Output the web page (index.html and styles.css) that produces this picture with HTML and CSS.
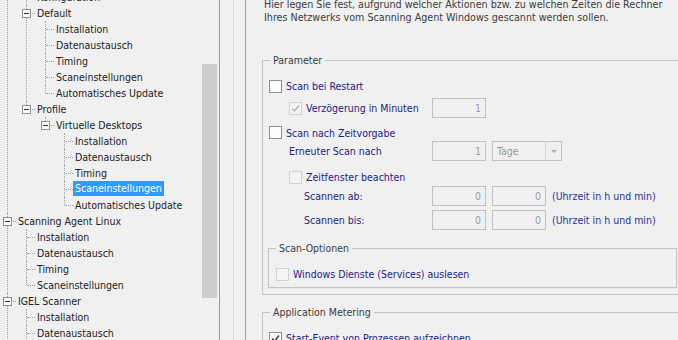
FILE: index.html
```html
<!DOCTYPE html>
<html>
<head>
  <title>Scanning Agent Windows - Scaneinstellungen</title>
  <link rel="stylesheet" href="styles.css">
</head>
<body>
  <div class="window">

    <!-- TREE -->
    <div class="tree-panel">
      <div class="tree-wrap">
        <ul class="tree">
          <li>
            <div class="node"><i class="exp"></i><span>Scanning Agent Windows</span></div>
            <ul>
              <li><div class="node"><span>Konfiguration</span></div></li>
              <li>
                <div class="node"><i class="exp"></i><span>Default</span></div>
                <ul>
                  <li><div class="node"><span>Installation</span></div></li>
                  <li><div class="node"><span>Datenaustausch</span></div></li>
                  <li><div class="node"><span>Timing</span></div></li>
                  <li><div class="node"><span>Scaneinstellungen</span></div></li>
                  <li><div class="node"><span>Automatisches Update</span></div></li>
                </ul>
              </li>
              <li>
                <div class="node"><i class="exp"></i><span>Profile</span></div>
                <ul>
                  <li>
                    <div class="node"><i class="exp"></i><span>Virtuelle Desktops</span></div>
                    <ul>
                      <li><div class="node"><span>Installation</span></div></li>
                      <li><div class="node"><span>Datenaustausch</span></div></li>
                      <li><div class="node"><span>Timing</span></div></li>
                      <li><div class="node sel"><span>Scaneinstellungen</span></div></li>
                      <li><div class="node"><span>Automatisches Update</span></div></li>
                    </ul>
                  </li>
                </ul>
              </li>
            </ul>
          </li>
          <li>
            <div class="node"><i class="exp"></i><span>Scanning Agent Linux</span></div>
            <ul>
              <li><div class="node"><span>Installation</span></div></li>
              <li><div class="node"><span>Datenaustausch</span></div></li>
              <li><div class="node"><span>Timing</span></div></li>
              <li><div class="node"><span>Scaneinstellungen</span></div></li>
            </ul>
          </li>
          <li>
            <div class="node"><i class="exp"></i><span>IGEL Scanner</span></div>
            <ul>
              <li><div class="node"><span>Installation</span></div></li>
              <li><div class="node"><span>Datenaustausch</span></div></li>
              <li><div class="node"><span>Timing</span></div></li>
              <li><div class="node"><span>Scaneinstellungen</span></div></li>
            </ul>
          </li>
          <li><div class="node"><span>Einstellungen</span></div></li>
        </ul>
      </div>
      <div class="vscroll"><div class="thumb"></div></div>
    </div>

    <div class="splitter"><div class="splitter-line"></div></div>

    <!-- SETTINGS -->
    <div class="content">
      <p class="intro">Hier legen Sie fest, aufgrund welcher Aktionen bzw. zu welchen Zeiten die Rechner<br>Ihres Netzwerks vom Scanning Agent Windows gescannt werden sollen.</p>

      <fieldset class="group group-main">
        <legend>Parameter</legend>

        <div class="row mt10">
          <div class="lbl in1"><span class="cb"></span>Scan bei Restart</div>
        </div>
        <div class="row tall mt3">
          <div class="lbl in2">
            <span class="cb off"><svg width="11" height="11" viewBox="0 0 11 11"><path d="M2 5.5 L4.5 8 L9 2.5" fill="none" stroke="#b4b4b4" stroke-width="1.4"/></svg></span>Verzögerung in Minuten
          </div>
          <input class="tb" value="1" disabled>
        </div>
        <div class="row short mt6">
          <div class="lbl in1"><span class="cb"></span>Scan nach Zeitvorgabe</div>
        </div>
        <div class="row tall">
          <div class="lbl in2">Erneuter Scan nach</div>
          <input class="tb" value="1" disabled>
          <div class="dd"><span class="dd-text">Tage</span><span class="dd-btn"><i class="arrow"></i></span></div>
        </div>
        <div class="row mt7">
          <div class="lbl in2"><span class="cb off"></span>Zeitfenster beachten</div>
        </div>
        <div class="row tall">
          <div class="lbl in3">Scannen ab:</div>
          <input class="tb" value="0" disabled>
          <input class="tb" value="0" disabled>
          <span class="hint">(Uhrzeit in h und min)</span>
        </div>
        <div class="row tall mt4">
          <div class="lbl in3">Scannen bis:</div>
          <input class="tb" value="0" disabled>
          <input class="tb" value="0" disabled>
          <span class="hint">(Uhrzeit in h und min)</span>
        </div>

        <fieldset class="group group-sub">
          <legend>Scan-Optionen</legend>
          <div class="row mt10">
            <div class="lbl in-sub"><span class="cb off"></span>Windows Dienste (Services) auslesen</div>
          </div>
        </fieldset>
      </fieldset>

      <fieldset class="group group-main group-next">
        <legend>Application Metering</legend>
        <div class="row mt10">
          <div class="lbl in1">
            <span class="cb"><svg width="11" height="11" viewBox="0 0 11 11"><path d="M2 5.5 L4.5 8 L9 2.5" fill="none" stroke="#333" stroke-width="1.4"/></svg></span>Start-Event von Prozessen aufzeichnen
          </div>
        </div>
      </fieldset>
    </div>
  </div>
</body>
</html>
```

FILE: styles.css
```css
body {
  margin: 0;
  background: #f0f0f0;
  font-family: "DejaVu Sans Condensed", "Liberation Sans", sans-serif;
  font-size: 10.5px;
  color: #222;
}
.window { display: flex; height: 340px; overflow: hidden; }

/* tree view on the left */
.tree-panel {
  width: 220px;
  flex: none;
  box-sizing: border-box;
  display: flex;
  padding-right: 2px;
  border-right: 1px solid #9d9d9d;
}
.tree-wrap { flex: 1; overflow: hidden; }
.tree { margin: -27px 0 0; padding: 0; list-style: none; }
.tree ul { margin: 0; padding: 0 0 0 19px; list-style: none; }
.tree li { position: relative; }
.tree li::before {
  content: "";
  position: absolute;
  left: 7px;
  top: 0;
  bottom: 0;
  border-left: 1px dotted #a3a3a3;
}
.tree li:last-child::before { bottom: auto; height: 8px; }
.node {
  position: relative;
  height: 16px;
  line-height: 16px;
  padding-left: 16px;
  white-space: nowrap;
}
.node::before {
  content: "";
  position: absolute;
  left: 8px;
  top: 8px;
  width: 8px;
  border-top: 1px dotted #a3a3a3;
}
.node span { padding: 0 2px; }
.node.sel span {
  display: inline-block;
  vertical-align: top;
  line-height: 15px;
  background: #3399ff;
  color: #fff;
}
.exp {
  position: absolute;
  left: 3px;
  top: 4px;
  width: 9px;
  height: 9px;
  box-sizing: border-box;
  border: 1px solid #929292;
  background: #fcfcfc;
}
.exp::after {
  content: "";
  position: absolute;
  left: 1px;
  top: 3px;
  width: 5px;
  height: 1px;
  background: #333;
}

.vscroll { width: 15px; flex: none; background: #f0f0f0; }
.thumb { margin-top: 64px; height: 234px; background: #cdcdcd; }

.splitter { width: 25px; flex: none; border-right: 1px solid #a5a5a5; }
.splitter-line { margin-left: 13px; height: 100%; border-left: 1px solid #dadada; }

/* settings on the right */
.content { flex: 1; min-width: 0; padding-left: 16px; overflow: hidden; }
.intro {
  margin: -2px 0 0;
  padding-left: 2px;
  font-size: 10.65px;
  line-height: 13px;
  color: #3c3c3c;
  white-space: nowrap;
}

.group {
  margin: 0;
  padding: 0;
  min-width: 0;
  box-sizing: border-box;
  border: 1px solid #c4c4c4;
}
.group legend {
  margin-left: 7px;
  padding: 0 3px;
  line-height: 14px;
  color: #3c3c3c;
}
.group-main { width: 440px; margin-top: 29px; }
.group-next { margin-top: 10px; }
.group-sub { width: 409px; margin: 11px 0 6px 5px; padding-bottom: 4px; }

.row { display: flex; align-items: center; height: 18px; white-space: nowrap; }
.row.tall { height: 20px; }
.row.short { height: 17px; }
.mt3 { margin-top: 3px; }
.mt4 { margin-top: 4px; }
.mt6 { margin-top: 6px; }
.mt7 { margin-top: 7px; }
.mt10 { margin-top: 10px; }

.lbl {
  width: 169px;
  flex: none;
  box-sizing: border-box;
  display: flex;
  align-items: center;
  color: #1d2286;
}
.in1 { padding-left: 6px; }
.in2 { padding-left: 26px; }
.in3 { padding-left: 41px; }
.in-sub { padding-left: 7px; width: auto; }

.cb {
  width: 13px;
  height: 13px;
  flex: none;
  box-sizing: border-box;
  margin-right: 4px;
  border: 1px solid #8f8f8f;
  background: #fff;
}
.cb svg { display: block; }
.cb.off { border-color: #d2d2d2; background: #f4f4f4; }

.tb {
  width: 54px;
  height: 20px;
  box-sizing: border-box;
  margin: 0;
  padding: 0 4px 0 0;
  border: 1px solid #c2c2c2;
  background: #f0f0f0;
  font: inherit;
  color: #9a9a9a;
  text-align: right;
}
.tb + .tb, .tb + .dd { margin-left: 6px; }
.dd {
  width: 70px;
  height: 20px;
  box-sizing: border-box;
  display: flex;
  border: 1px solid #c2c2c2;
  color: #9a9a9a;
}
.dd-text { flex: 1; padding-left: 4px; line-height: 18px; }
.dd-btn {
  width: 15px;
  display: flex;
  align-items: center;
  justify-content: center;
  border-left: 1px solid #d6d6d6;
}
.arrow {
  width: 0;
  height: 0;
  border-top: 3px solid #a8a8a8;
  border-left: 3px solid transparent;
  border-right: 3px solid transparent;
}
.hint { margin-left: 6px; color: #2a2e9c; }
```
